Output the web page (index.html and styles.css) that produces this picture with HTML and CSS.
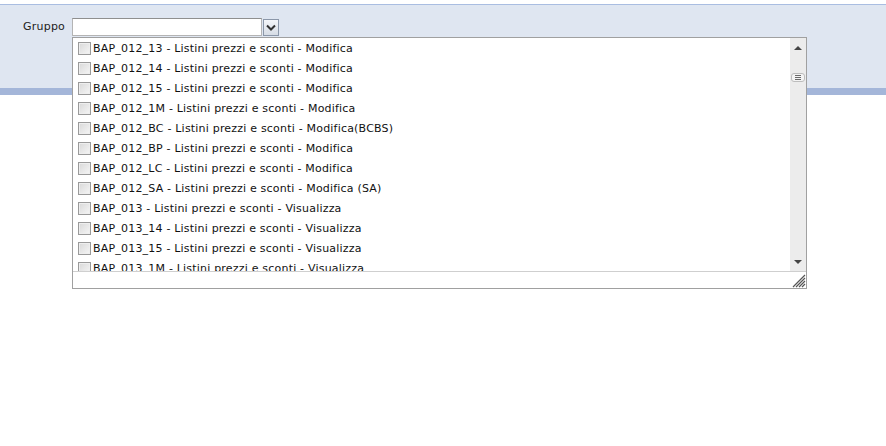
FILE: index.html
```html
<!DOCTYPE html>
<html>
<head>
<meta charset="utf-8">
<link rel="stylesheet" href="styles.css">
</head>
<body>
<div class="topgap"></div>
<div class="panel">
  <div class="form-row">
    <label class="lbl">Gruppo</label>
    <div class="combo">
      <div class="combo-input"></div>
      <div class="combo-btn">
        <svg width="10" height="7" viewBox="0 0 10 7"><path d="M1 1.5 L5 5.5 L9 1.5" fill="none" stroke="#333" stroke-width="2"/></svg>
      </div>
    </div>
  </div>
</div>
<div class="dropdown">
  <div class="dd-body">
    <ul class="dd-list">
      <li><span class="cb"></span>BAP_012_13 - Listini prezzi e sconti - Modifica</li>
      <li><span class="cb"></span>BAP_012_14 - Listini prezzi e sconti - Modifica</li>
      <li><span class="cb"></span>BAP_012_15 - Listini prezzi e sconti - Modifica</li>
      <li><span class="cb"></span>BAP_012_1M - Listini prezzi e sconti - Modifica</li>
      <li><span class="cb"></span>BAP_012_BC - Listini prezzi e sconti - Modifica(BCBS)</li>
      <li><span class="cb"></span>BAP_012_BP - Listini prezzi e sconti - Modifica</li>
      <li><span class="cb"></span>BAP_012_LC - Listini prezzi e sconti - Modifica</li>
      <li><span class="cb"></span>BAP_012_SA - Listini prezzi e sconti - Modifica (SA)</li>
      <li><span class="cb"></span>BAP_013 - Listini prezzi e sconti - Visualizza</li>
      <li><span class="cb"></span>BAP_013_14 - Listini prezzi e sconti - Visualizza</li>
      <li><span class="cb"></span>BAP_013_15 - Listini prezzi e sconti - Visualizza</li>
      <li><span class="cb"></span>BAP_013_1M - Listini prezzi e sconti - Visualizza</li>
    </ul>
    <div class="sbar">
      <div class="sb-up"></div>
      <div class="sb-thumb"><span></span><span></span><span></span></div>
      <div class="sb-down"></div>
    </div>
  </div>
  <div class="dd-foot">
    <svg class="grip" width="14" height="14" viewBox="0 0 14 14">
      <path d="M13 1 L1 13 M13 4 L4 13 M13 7 L7 13 M13 10 L10 13" stroke="#555" stroke-width="1.2" fill="none"/>
    </svg>
  </div>
</div>
</body>
</html>
```

FILE: styles.css
```css
html, body {
  margin: 0;
  padding: 0;
  background: #ffffff;
  font-family: "DejaVu Sans", "Liberation Sans", sans-serif;
  font-size: 11px;
  color: #222;
}

.topgap {
  height: 4px;
}

.panel {
  border-top: 1px solid #a9bde1;
  border-bottom: 7px solid #a4b6d9;
  background: #dfe6f1;
  box-sizing: border-box;
  height: 91px;
}

.form-row {
  display: flex;
  align-items: flex-start;
  padding-top: 13px;
}

.lbl {
  width: 72px;
  text-align: right;
  padding-right: 7px;
  box-sizing: border-box;
  line-height: 18px;
  color: #222;
  letter-spacing: 0.2px;
}

.combo {
  display: flex;
  gap: 1px;
}

.combo-input {
  width: 190px;
  height: 18px;
  box-sizing: border-box;
  background: #fff;
  border: 1px solid #b4b4b4;
  border-top-color: #8f8f8f;
}

.combo-btn {
  width: 16px;
  height: 17px;
  box-sizing: border-box;
  margin-top: 1px;
  border: 1px solid #8b97a9;
  background: linear-gradient(#f4f6f9, #d6dce5);
  display: flex;
  align-items: center;
  justify-content: center;
}

.dropdown {
  position: absolute;
  left: 72px;
  top: 37px;
  width: 735px;
  height: 252px;
  box-sizing: border-box;
  border: 1px solid #a0a0a0;
  background: #fff;
  display: flex;
  flex-direction: column;
}

.dd-body {
  display: flex;
  height: 233px;
  border-bottom: 1px solid #cfcfcf;
}

.dd-list {
  flex: 1;
  list-style: none;
  margin: 0;
  padding: 0;
  overflow: hidden;
}

.dd-list li {
  height: 20px;
  display: flex;
  align-items: center;
  white-space: nowrap;
  color: #111;
  letter-spacing: 0.2px;
}

.cb {
  width: 13px;
  height: 13px;
  box-sizing: border-box;
  margin-left: 5px;
  margin-right: 2px;
  border: 1px solid #9a9a9a;
  background: linear-gradient(135deg, #d8d8d8, #f6f6f6);
  box-shadow: inset 0 0 0 1px #eeeeee;
}

.sbar {
  width: 16px;
  background: #ececec;
  position: relative;
}

.sb-up, .sb-down {
  position: absolute;
  left: 4px;
  width: 0;
  height: 0;
  border-left: 4px solid transparent;
  border-right: 4px solid transparent;
}

.sb-up {
  top: 8px;
  border-bottom: 4px solid #444;
}

.sb-down {
  bottom: 7px;
  border-top: 4px solid #444;
}

.sb-thumb {
  position: absolute;
  left: 1px;
  top: 35px;
  width: 14px;
  height: 9px;
  box-sizing: border-box;
  border: 1px solid #bdbdbd;
  border-radius: 3px;
  background: #f4f4f4;
  display: flex;
  flex-direction: column;
  justify-content: center;
  gap: 1px;
  padding: 0 3px;
}

.sb-thumb span {
  display: block;
  height: 1px;
  background: #6a6a6a;
}

.dd-foot {
  flex: 1;
  position: relative;
}

.grip {
  position: absolute;
  right: 0;
  bottom: 0;
}
```
